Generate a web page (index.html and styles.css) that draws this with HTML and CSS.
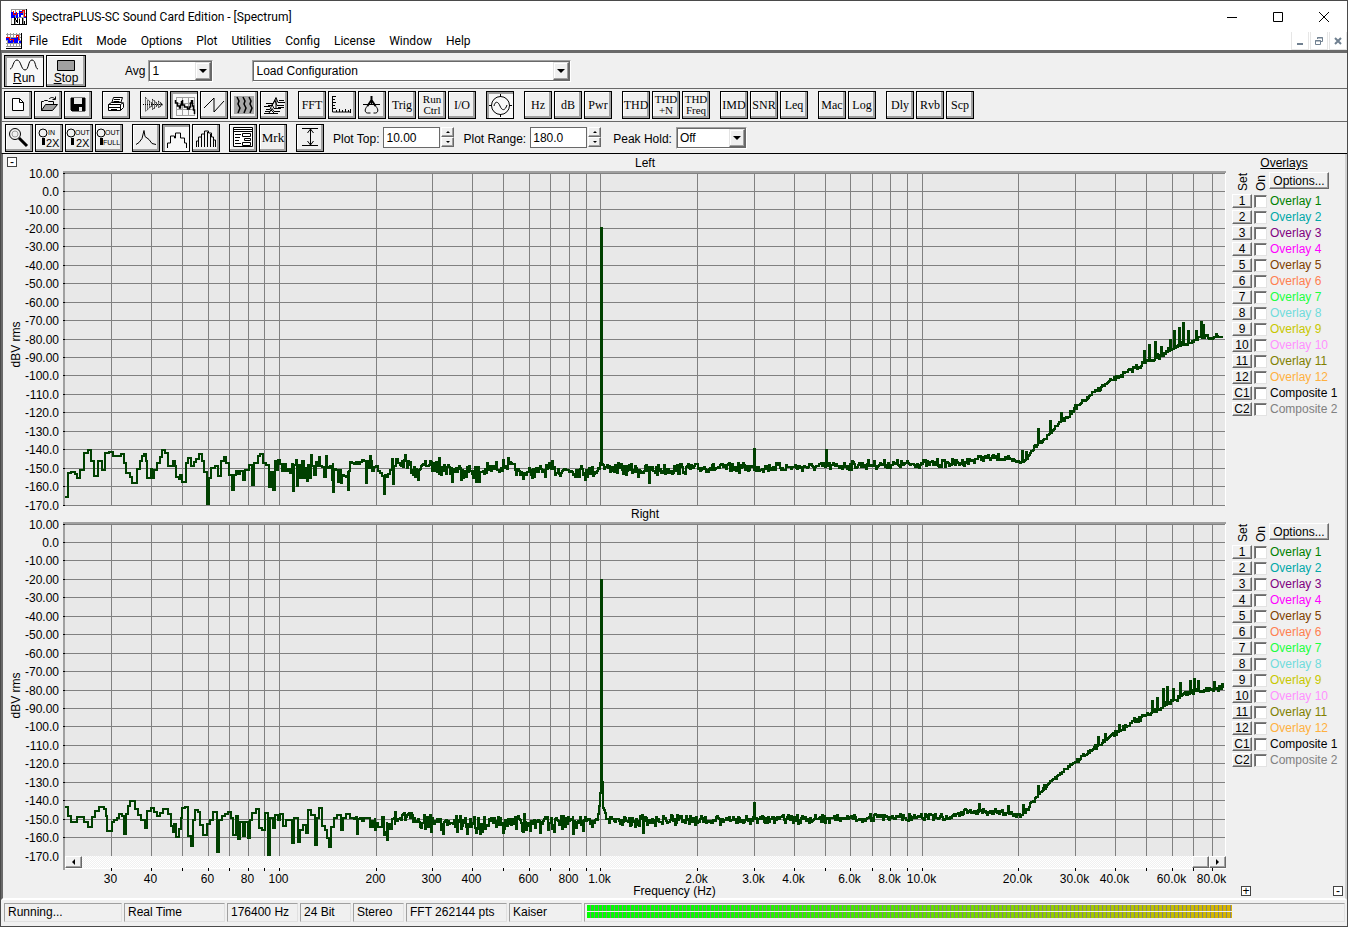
FILE: index.html
```
<!DOCTYPE html>
<html lang="en">
<head>
  <meta charset="UTF-8" />
  <meta name="viewport" content="width=device-width, initial-scale=1.0" />
  <title>SpectraPLUS-SC Sound Card Edition - [Spectrum]</title>
  <link rel="stylesheet" href="styles.css">
</head>
<body>
  <header class="titlebar">
    <svg class="app-icon" width="16" height="16" viewBox="0 0 16 16" shape-rendering="crispEdges">
      <path class="grid" d="M0.5 0v16M4.5 0v16M8.5 0v16M12.5 0v16M0 0.5h16M0 4.5h16M0 8.5h16"/>
      <path class="blue" d="M1 3v5h2v-3h3v4M9 8V3h2v3M13 8h2"/>
      <path class="red" d="M2 2v3h3v-2M9 3h2V1h2v6h2"/>
      <path class="ink" d="M15.5 0v16M0 15.5h16M3.5 15V9l3 4V9M8.5 15v-5M11.5 15V9M13.5 15v-3"/>
    </svg>
    <h1>SpectraPLUS-SC Sound Card Edition - [Spectrum]</h1>
    <div class="caption-buttons">
      <button aria-label="Minimize"><svg width="12" height="12" viewBox="0 0 12 12"><path d="M1 6.5h10"/></svg></button>
      <button aria-label="Maximize"><svg width="12" height="12" viewBox="0 0 12 12"><path d="M1.5 1.5h9v9h-9z"/></svg></button>
      <button aria-label="Close"><svg width="12" height="12" viewBox="0 0 12 12"><path d="M1 1l10 10M11 1L1 11"/></svg></button>
    </div>
  </header>

  <nav class="menubar">
    <svg class="app-icon" width="16" height="16" viewBox="0 0 16 16" shape-rendering="crispEdges">
      <path class="grid" d="M1.5 0v14M4.5 0v14M7.5 0v14M10.5 0v14M13.5 0v14M0 1.5h15M0 4.5h15M0 7.5h15M0 10.5h15M0 13.5h15"/>
      <path class="blue" d="M0 6h3v3h3V6h3v3h2V4M13 9h2"/>
      <path class="red" d="M0 4h3v2h4v3M10 5V2h2v4h2"/>
      <path class="ink" d="M15.5 0v16M0 15.5h16"/>
    </svg>
    <button>File</button>
    <button>Edit</button>
    <button>Mode</button>
    <button>Options</button>
    <button>Plot</button>
    <button>Utilities</button>
    <button>Config</button>
    <button>License</button>
    <button>Window</button>
    <button>Help</button>
    <div class="mdi-buttons">
      <button aria-label="Minimize window"><svg width="10" height="10" viewBox="0 0 10 10"><path d="M2 8h6"/></svg></button>
      <button aria-label="Restore window"><svg width="10" height="10" viewBox="0 0 10 10"><path class="thin" d="M3.5 3V1.5h5v4H7M1.5 4.5h5v4h-5zM1 5h6M3 2h6"/></svg></button>
      <button aria-label="Close window"><svg width="10" height="10" viewBox="0 0 10 10"><path d="M2 2l6 6M8 2l-6 6"/></svg></button>
    </div>
  </nav>

  <div class="toolbar run-bar">
    <button class="big pressed">
      <svg width="30" height="14" viewBox="0 0 30 14"><path d="M1 11C4 11 4 2 8 2s4 10 8 10 3-10 7-10 3 9 6 9"/></svg>
      <span><u>R</u>un</span>
    </button>
    <button class="big">
      <svg width="20" height="14" viewBox="0 0 20 14"><path class="gray" d="M1.5 2.5h17v10h-17z"/></svg>
      <span><u>S</u>top</span>
    </button>
    <label class="avg-label" for="avg">Avg</label>
    <div class="combo avg-combo">
      <select id="avg"><option>1</option><option>2</option><option>4</option></select>
      <i></i>
    </div>
    <div class="combo config-combo">
      <select aria-label="Configuration"><option>Load Configuration</option></select>
      <i></i>
    </div>
  </div>

  <div class="toolbar tool-bar">
    <div class="group">
      <button aria-label="New"><svg viewBox="0 0 26 26"><path class="paper" d="M7.500 6.500h7l4 4v8h-11z"/><path d="M14.500 6.500v4h4"/></svg></button>
      <button aria-label="Open"><svg viewBox="0 0 26 26"><path d="M6.500 18.500v-9h2l1-1h3l1 1h5v3M14 7c2-2 4-2 6 0M20.500 4.500v3h-3"/><path class="gray" d="M6.500 18.500l4-6h12l-5 6z"/></svg></button>
      <button aria-label="Save"><svg viewBox="0 0 26 26"><path class="black" d="M6 6h14v13H7l-1-1z"/><path class="light" d="M9 6h8v6H9zM14 15h3v4h-3z"/></svg></button>
    </div>
    <div class="group">
      <button aria-label="Print"><svg viewBox="0 0 26 26"><path class="paper" d="M8.500 11.500l2-6h9l-2 6z"/><path d="M11 7.500h6M10.500 9.500h6"/><path class="paper" d="M5.500 12.500l3-2h10l2 1v4l-3 3h-12z"/><path d="M5.500 12.500h12v6M17.500 12.500l3-2M5.500 15.500h12M8 17.500h6"/></svg></button>
    </div>
    <div class="group">
      <button aria-label="Time series"><svg viewBox="0 0 26 26"><path class="dots" d="M4.500 6v13M6.500 8v9M8.500 9v7M10.500 10v5M11.500 7v11M13.500 8v9M15.500 10v5M17.500 9v7M19.500 10v5"/><path d="M2 12.500h20M4 5l8 7.500-8 7.500M11 7l6 5.500-6 5.500M17 9l5 3.500-5 3.500" stroke-dasharray="1 1"/></svg></button>
      <button class="pressed" aria-label="Spectrum"><svg viewBox="0 0 26 26"><path class="faint" d="M5.500 5v18M11.500 5v18M17.500 5v18M23.500 5v18M5 5.500h19M5 11.500h19M5 17.500h19M5 23.500h19"/><path d="M4.500 8v3h2v3h2v2h1v-3h1v-4M11.500 8v5h2v2h3v2h2v-2h1v-4h1v-3M21.500 8v6h1v4h1v4" stroke-width="1.500"/></svg></button>
      <button aria-label="Phase"><svg viewBox="0 0 26 26"><path d="M3 16L13 6v14L23 9"/></svg></button>
      <button aria-label="Spectrogram"><svg viewBox="0 0 26 26"><path class="mid" d="M3 4h20v18H3z"/><path d="M6 5l2 4-1 3 2 4-2 5M12 5l2 4-1 3 2 4-2 5M18 5l2 4-1 3 2 4-2 5" stroke-width="1.500"/></svg></button>
      <button aria-label="3-D surface"><svg viewBox="0 0 26 26"><path d="M3 21.500h14M4 19.500h5l2-3 2 3h6M5 17.500h4l2-5 2 4h7M3 14.500h6M5 11.500h7l3-6 2 5h7M7 13.500h4l3-5 2 5h7M15 6v10M17 15.500h6M18 8.500h5M8 21l2-3 3 3"/></svg></button>
    </div>
    <div class="group">
      <button>FFT</button>
      <button aria-label="Scaling"><svg viewBox="0 0 26 26"><path d="M3.500 4v16h18M3 4.500h4M4 7.500h2M4 10.500h3M4 13.500h2M4 16.500h3M7.500 20v-2M10.500 20v-3M13.500 20v-2M16.500 20v-3M19.500 20v-2M21.500 21v-4"/></svg></button>
      <button aria-label="Calibration"><svg viewBox="0 0 26 26"><path class="bold" d="M12.500 4v4M12.500 8l-4 6M12.500 8l4 6"/><path d="M4 12.500h17M12.500 8v5M8.500 14c-4 4-2 7 0 7h3M16.500 14c4 4 2 7 0 7h-2"/></svg></button>
      <button>Trig</button>
      <button class="two">Run<br>Ctrl</button>
      <button>I/O</button>
    </div>
    <div class="group">
      <button class="pressed" aria-label="Signal generator"><svg viewBox="0 0 26 26"><circle cx="13.500" cy="13.500" r="9"/><path d="M13.500 2v3M13.500 22v3M2 13.500h3M22 13.500h3M7 14c1-5 4-5 6 0s5 5 7-1"/></svg></button>
    </div>
    <div class="group">
      <button>Hz</button>
      <button>dB</button>
      <button>Pwr</button>
    </div>
    <div class="group">
      <button>THD</button>
      <button class="two">THD<br>+N</button>
      <button class="two">THD<br>Freq</button>
    </div>
    <div class="group">
      <button>IMD</button>
      <button>SNR</button>
      <button>Leq</button>
    </div>
    <div class="group">
      <button>Mac</button>
      <button>Log</button>
    </div>
    <div class="group">
      <button>Dly</button>
      <button>Rvb</button>
      <button>Scp</button>
    </div>
  </div>

  <div class="toolbar plot-bar">
    <div class="group">
      <button aria-label="Zoom"><svg viewBox="0 0 26 26"><circle cx="9" cy="9" r="5.500"/><circle class="faint" cx="9" cy="9" r="3"/><path class="thick" d="M13 13l8 8"/></svg></button>
      <button aria-label="Zoom in 2X"><svg viewBox="0 0 26 26"><circle cx="7" cy="8" r="4"/><path class="thick" d="M7.500 13v7"/><text x="12" y="10">IN</text><text class="lg" x="10" y="22">2X</text></svg></button>
      <button aria-label="Zoom out 2X"><svg viewBox="0 0 26 26"><circle cx="5" cy="8" r="4"/><path class="thick" d="M6.500 13v7"/><text x="9" y="10">OUT</text><text class="lg" x="10" y="22">2X</text></svg></button>
      <button aria-label="Zoom out full"><svg viewBox="0 0 26 26"><circle cx="5" cy="8" r="4"/><path class="thick" d="M5.500 13v7"/><text x="9" y="10">OUT</text><text x="7" y="20">FULL</text></svg></button>
    </div>
    <div class="group">
      <button aria-label="Line plot"><svg viewBox="0 0 26 26"><path d="M3 19.500l3-2 3-4 2-8 1 6 4 3 3 4 4 1"/></svg></button>
      <button class="pressed" aria-label="Step plot"><svg viewBox="0 0 26 26"><path d="M4.500 23v-5h3v-7h4v2h1V8h5v5h4v5h2v5"/></svg></button>
      <button aria-label="Bar plot"><svg viewBox="0 0 26 26"><path d="M3.500 22v-6h2v-4h3v-3h3v-3h4v2h3v4h2v3h2v7M5.500 22v-9M8.500 22V10M11.500 22V7M14.500 22V7M17.500 22V9M20.500 22v-8"/></svg></button>
    </div>
    <div class="group">
      <button aria-label="Display options"><svg viewBox="0 0 26 26"><path class="paper" d="M3.500 2.500h19v19h-19z"/><path d="M3 4.500h20M3 6.500h20M5 9.500h6M5 12.500h5M5 15.500h4M5 18.500h6M12.500 8.500h8v3h-8zM14.500 13.500h6v2h-6zM12.500 17.500h8v3h-8z"/></svg></button>
      <button class="mrk">Mrk</button>
    </div>
    <div class="group">
      <button aria-label="Auto scale"><svg viewBox="0 0 26 26"><path d="M5 3.500h16M5 20.500h16M13.500 4v16M10.500 8l3-4 3 4M10.500 16l3 4 3-4"/></svg></button>
    </div>
    <label for="plotTop">Plot Top:</label>
    <div class="spin">
      <input type="text" id="plotTop" value="10.00">
      <div class="steps"><button aria-label="Plot top up"><b class="up"></b></button><button aria-label="Plot top down"><b class="down"></b></button></div>
    </div>
    <label for="plotRange">Plot Range:</label>
    <div class="spin">
      <input type="text" id="plotRange" value="180.0">
      <div class="steps"><button aria-label="Plot range up"><b class="up"></b></button><button aria-label="Plot range down"><b class="down"></b></button></div>
    </div>
    <label class="peak-label" for="peakHold">Peak Hold:</label>
    <div class="combo peak-combo">
      <select id="peakHold"><option>Off</option><option>On</option></select>
      <i></i>
    </div>
  </div>

  <main class="workspace">
    <button class="box-btn collapse" aria-label="Collapse">-</button>
    <section class="channel">
      <div class="chart">
        <h2>Left</h2>
        <svg id="left"></svg>
      </div>
      <aside class="overlays" data-channel="left">
        <h3>Overlays</h3>
      </aside>
    </section>
    <section class="channel">
      <div class="chart">
        <h2>Right</h2>
        <svg id="right"></svg>
      </div>
      <aside class="overlays" data-channel="right">
        <h3></h3>
      </aside>
    </section>
    <div class="axis-row">
      <div class="axis">
        <div class="scrollbar">
          <button aria-label="Scroll left"><b class="prev"></b></button>
          <span class="thumb"></span>
          <button aria-label="Scroll right"><b class="next"></b></button>
        </div>
        <svg id="xaxis"></svg>
      </div>
      <div class="axis-tools">
        <button class="box-btn" aria-label="Expand">+</button>
        <button class="box-btn" aria-label="Shrink">-</button>
      </div>
    </div>
  </main>

  <footer class="statusbar">
    <span class="w-state">Running...</span>
    <span class="w-mode">Real Time</span>
    <span class="w-rate">176400 Hz</span>
    <span class="w-bits">24 Bit</span>
    <span class="w-bits">Stereo</span>
    <span class="w-fft">FFT 262144 pts</span>
    <span class="w-window">Kaiser</span>
    <div class="levels">
      <div class="level"></div>
      <div class="level"></div>
    </div>
  </footer>
  <script src="script.js"></script>
</body>
</html>
```
FILE: styles.css
```
* {
  box-sizing: border-box;
  margin: 0;
  padding: 0;
}
body {
  display: flex;
  flex-direction: column;
  min-height: 100vh;
  border: 1px solid #4a4a4a;
  background: #f0f0f0;
  color: #000;
  font-family: "Liberation Sans", Arial, sans-serif;
  font-size: 12px;
  line-height: 14px;
}
button, input, select {
  font: inherit;
  color: inherit;
  border: none;
  border-radius: 0;
  background: none;
  outline: none;
}
h1, h2, h3 {
  font-size: 12px;
  font-weight: normal;
}
svg {
  display: block;
  fill: none;
  stroke: #000;
}

/* title and menu */
.titlebar, .menubar {
  display: flex;
  align-items: center;
  background: #fff;
  font-family: Roboto, "Open Sans", sans-serif;
}
.titlebar {
  height: 31px;
  padding-left: 10px;
}
.titlebar h1 {
  margin-left: 5px;
  font-size: 12px;
}
.app-icon .grid { stroke: #999; }
.app-icon .blue { stroke: #00f; stroke-width: 2; }
.app-icon .red { stroke: #e00; }
.caption-buttons {
  display: flex;
  margin-left: auto;
}
.caption-buttons button {
  display: flex;
  justify-content: center;
  width: 46px;
}
.menubar {
  height: 18px;
  padding-left: 5px;
}
.menubar > button {
  padding: 0 7px;
}
.mdi-buttons {
  display: flex;
  gap: 1px;
  margin-left: auto;
}
.mdi-buttons button {
  display: flex;
  align-items: center;
  justify-content: center;
  width: 18px;
  height: 18px;
  border: 1px solid #e6e6e6;
  border-top: none;
}
.mdi-buttons svg {
  stroke: #708090;
  stroke-width: 2;
}
.mdi-buttons .thin {
  stroke-width: 1;
}

/* toolbars */
.toolbar {
  display: flex;
  flex-wrap: wrap;
  border-left: 1px solid #696969;
  border-bottom: 1px solid #696969;
  padding: 2px 2px 1px;
}
.run-bar {
  min-height: 39px;
  border-top: 3px solid #696969;
  align-items: flex-start;
  gap: 2px;
}
.tool-bar {
  min-height: 33px;
  gap: 10px;
  align-items: flex-start;
}
.plot-bar {
  min-height: 32px;
  padding-left: 3px;
  column-gap: 9px;
  align-items: flex-start;
  border-bottom-color: #000;
}
.group {
  display: flex;
  gap: 2px;
}
.group > button, .big {
  width: 28px;
  height: 28px;
  border: 1px solid #000;
  background: #f0f0f0;
  box-shadow: inset -2px -2px #a0a0a0, inset 1px 1px #fff;
  font-family: "Liberation Serif", "Times New Roman", serif;
  font-size: 12px;
  white-space: nowrap;
  display: flex;
  align-items: center;
  justify-content: center;
}
.group > button.pressed, .big.pressed {
  background: #f8f8f8;
  box-shadow: inset 2px 2px #a0a0a0;
}
.group > button.two {
  font-size: 11px;
  line-height: 11px;
}
.group > button.mrk {
  font-size: 13px;
}
.group svg {
  width: 26px;
  height: 26px;
  flex: none;
}
.paper { fill: #fff; }
.gray { fill: #a0a0a0; }
.black { fill: #000; }
.light { fill: #e8e8e8; stroke: none; }
.mid { fill: #a8a8a8; stroke: none; }
.faint { stroke: #a0a0a0; }
.dots { stroke: #707070; }
.bold { stroke-width: 2; }
.thick { stroke-width: 3; }
.group text {
  fill: #000;
  stroke: none;
  font: 7px "Liberation Sans", sans-serif;
}
.group text.lg {
  font-size: 11px;
}
.big {
  width: 40px;
  height: 32px;
  flex-direction: column;
  font-family: "Liberation Sans", Arial, sans-serif;
  line-height: 13px;
}
.combo {
  position: relative;
  height: 22px;
  border: 1px solid #a0a0a0;
  border-right-color: #fff;
  border-bottom-color: #fff;
  background: #fff;
}
.combo select {
  appearance: none;
  width: 100%;
  height: 20px;
  padding-left: 2px;
  border: 1px solid #696969;
}
.combo i {
  position: absolute;
  top: 1px;
  right: 1px;
  width: 16px;
  height: 18px;
  background: #f0f0f0;
  border: 1px solid #e3e3e3;
  border-right-color: #696969;
  border-bottom-color: #696969;
  box-shadow: inset -1px -1px #a0a0a0, inset 1px 1px #fff;
  pointer-events: none;
}
.combo i::after {
  content: "";
  position: absolute;
  left: 3px;
  top: 6px;
  border: 4px solid transparent;
  border-top-color: #000;
  border-bottom: none;
}
.avg-label { margin: 9px 1px 0 37px; }
.avg-combo { width: 65px; margin-top: 5px; }
.config-combo { width: 319px; margin: 5px 0 0 37px; }
.plot-bar label { margin-top: 8px; }
.plot-bar .peak-label { margin-left: 3px; }
.peak-combo { width: 71px; margin: 3px 0 0 -5px; }
.spin {
  display: flex;
  gap: 1px;
  margin: 3px 0 0 -5px;
}
.spin input {
  width: 57px;
  height: 21px;
  padding-left: 2px;
  border: 1px solid #696969;
  background: #fff;
}
.steps button {
  display: flex;
  align-items: center;
  justify-content: center;
  width: 13px;
  height: 10px;
}
.steps button, .scrollbar button, .thumb, .set, .options {
  background: #f0f0f0;
  border: 1px solid #fff;
  border-right-color: #696969;
  border-bottom-color: #696969;
  box-shadow: inset -1px -1px #a0a0a0;
}
.up, .down {
  border: 2px solid transparent;
}
.up { border-top: none; border-bottom-color: #000; }
.down { border-bottom: none; border-top-color: #000; }

/* plots */
.workspace {
  position: relative;
  flex: 1;
  display: flex;
  flex-direction: column;
  padding-top: 1px;
  border: 2px solid #696969;
  border-top: none;
  border-right-color: #d0d0d0;
  border-bottom-color: #fff;
}
.box-btn {
  width: 10px;
  height: 10px;
  border: 1px solid #444;
  background: #fff;
  line-height: 8px;
  text-align: center;
}
.collapse {
  position: absolute;
  left: 4px;
  top: 3px;
}
.channel {
  flex: 1;
  display: flex;
  gap: 6px;
}
.chart {
  flex: 1;
  min-width: 0;
  display: flex;
  flex-direction: column;
}
.chart h2 {
  height: 16px;
  line-height: 16px;
  padding-left: 61px;
  text-align: center;
}
.chart svg {
  width: 100%;
  height: 0;
  min-height: 335px;
  flex: 1;
  overflow: visible;
}
svg text {
  fill: #000;
  stroke: none;
}
.plot-bg { fill: #e8e8e8; stroke: none; }
.gridline { stroke: #808080; }
.frame { stroke: #a0a0a0; stroke-width: 2; }
.edge { stroke: #fff; }
.trace { stroke: #004000; stroke-width: 2; }
.overlays {
  width: 113px;
}
.overlays h3 {
  height: 16px;
  line-height: 17px;
  text-align: center;
  padding-right: 9px;
  text-decoration: underline;
}
.overlay-head {
  display: flex;
  height: 22px;
  padding-left: 2px;
}
.vertical {
  writing-mode: vertical-rl;
  transform: rotate(180deg);
  width: 18px;
  height: 20px;
  line-height: 18px;
}
.options {
  width: 60px;
  height: 17px;
  margin: 1px 0 0 -1px;
  line-height: 14px;
}
.overlay-row {
  display: flex;
  align-items: center;
  height: 16px;
}
.set {
  width: 20px;
  height: 14px;
  line-height: 12px;
}
.overlay-row input {
  appearance: none;
  width: 13px;
  height: 13px;
  margin: 0 2px 0 2px;
  background: #fff;
  border: 1px solid #808080;
  border-right-color: #e3e3e3;
  border-bottom-color: #e3e3e3;
  box-shadow: inset 1px 1px #696969;
}
.overlay-row label {
  margin-left: 1px;
  white-space: nowrap;
}
.axis-row {
  display: flex;
  gap: 6px;
  margin-top: -1px;
}
.axis {
  flex: 1;
  min-width: 0;
}
.scrollbar {
  position: relative;
  display: flex;
  height: 12px;
  margin-left: 62px;
  background: repeating-conic-gradient(#fff 0 25%, #f0f0f0 0 50%) 0 0 / 2px 2px;
}
.scrollbar button, .thumb {
  width: 17px;
  height: 12px;
  display: flex;
  align-items: center;
  justify-content: center;
}
.thumb {
  margin-left: auto;
}
.prev, .next {
  border: 3px solid transparent;
}
.prev { border-left: none; border-right-color: #000; }
.next { border-right: none; border-left-color: #000; }
#xaxis {
  width: 100%;
  height: 30px;
  overflow: visible;
}
.axis-tools {
  width: 113px;
  display: flex;
  justify-content: space-between;
  align-items: flex-end;
  padding: 0 2px 2px 9px;
}

/* status */
.statusbar {
  display: flex;
  gap: 2px;
  height: 26px;
  padding: 3px 2px 4px 3px;
}
.statusbar span, .levels {
  border: 1px solid #a0a0a0;
  border-right-color: #e0e0e0;
  border-bottom-color: #e0e0e0;
  padding-left: 3px;
  line-height: 17px;
  white-space: nowrap;
}
.w-state { width: 118px; }
.w-mode { width: 101px; }
.w-rate { width: 71px; }
.w-bits { width: 51px; }
.w-fft { width: 101px; }
.w-window { width: 73px; }
.levels {
  flex: 1;
  padding: 1px 2px;
}
.level {
  width: 85.4%;
  height: 6px;
  margin-bottom: 1px;
  background:
    repeating-linear-gradient(90deg, transparent 0 3px, #808080 3px 4px),
    linear-gradient(90deg, #00ff00, #10f800 20%, #d8b400);
}
```
FILE: script.js
```
const SVG_NS = "http://www.w3.org/2000/svg";
const X0 = 62;
const LOG_MIN = 1.3332;
const LOG_MAX = 4.9424;
const FREQS = [30, 40, 50, 60, 70, 80, 90, 100, 200, 300, 400, 500, 600, 700, 800, 900,
  1000, 2000, 3000, 4000, 5000, 6000, 7000, 8000, 9000, 10000, 20000, 30000, 40000,
  50000, 60000, 70000, 80000];
const FREQ_LABELS = {
  30: "30", 40: "40", 60: "60", 80: "80", 100: "100", 200: "200", 300: "300", 400: "400",
  600: "600", 800: "800", 1000: "1.0k", 2000: "2.0k", 3000: "3.0k", 4000: "4.0k",
  6000: "6.0k", 8000: "8.0k", 10000: "10.0k", 20000: "20.0k", 30000: "30.0k",
  40000: "40.0k", 60000: "60.0k", 80000: "80.0k"
};

const OVERLAYS = [
  ["1", "Overlay 1", "#008000"], ["2", "Overlay 2", "#00a8a8"], ["3", "Overlay 3", "#800080"],
  ["4", "Overlay 4", "#ff00ff"], ["5", "Overlay 5", "#804000"], ["6", "Overlay 6", "#ff8050"],
  ["7", "Overlay 7", "#20ff40"], ["8", "Overlay 8", "#70dcdc"], ["9", "Overlay 9", "#c8c800"],
  ["10", "Overlay 10", "#ff90ff"], ["11", "Overlay 11", "#808000"], ["12", "Overlay 12", "#ffb040"],
  ["C1", "Composite 1", "#000000"], ["C2", "Composite 2", "#808080"]
];

// points: measured low bins [x, y]
// floor: [x, y, spread up, spread down], spikes: [x, y]
const TRACES = {
  left: {
    seed: 7, ox: 65, oy: 173,
    points: [[65,497],[68,473],[71,472],[75,474],[77,478],[80,470],[84,453],[88,450],[91,461],
      [94,476],[98,461],[102,470],[105,453],[109,452],[113,456],[118,456],[121,454],[124,463],
      [126,473],[130,477],[132,483],[137,469],[140,461],[142,456],[144,454],[146,461],[147,478],
      [151,469],[152,478],[154,470],[157,463],[160,457],[162,450],[165,453],[168,466],[171,466],
      [173,461],[175,466],[176,477],[179,479],[180,475],[182,482],[186,463],[188,458],[191,466],
      [194,462],[196,459],[199,454],[202,461],[204,472],[207,504],[209,478],[211,468],[215,466],
      [218,476],[221,461],[224,457],[226,463],[229,475],[232,490],[234,475],[236,471],[238,474],
      [240,471],[243,480],[245,470],[249,465],[252,485],[254,463],[258,456],[260,454],[263,463],
      [266,465],[269,487],[271,472],[273,490],[275,461],[277,470]],
    floor: [[278,466,6,14],[300,465,6,16],[330,467,8,16],[346,478,6,7],[350,463,3,4],[370,461,5,16],
      [380,476,5,5],[386,474,5,5],[388,466,7,11],[398,466,7,9],[405,461,5,6],[415,472,4,7],
      [425,464,3,5],[440,467,6,9],[480,472,8,8],[508,464,5,6],[520,474,5,5],[550,469,6,8],
      [597,471,5,7],[600,463,3,3],[604,467,4,6],[640,470,6,8],[700,468,5,5],[800,467,4,5],
      [870,465,5,4],[960,463,4,4],[980,458,3,3],[1005,458,4,3],[1010,461,3,3],[1024,462,2,2],
      [1035,445,2,3],[1045,438,1,3],[1060,422,1,2],[1075,409,3,4],[1090,395,2,3],[1110,381,2,2],
      [1133,369,3,3],[1150,360,3,4],[1170,350,3,4],[1190,342,3,2],[1205,337,2,2],[1225,337,4,2]],
    spikes: [[293,491],[297,486],[307,481],[311,455],[319,457],[326,456],[333,492],[341,483],
      [348,490],[366,483],[370,456],[384,494],[393,484],[405,455],[418,480],[439,458],[452,482],
      [461,480],[476,482],[479,482],[508,458],[552,461],[585,480],[601,228],[649,483],[754,449],
      [826,450],[1022,451],[1026,452],[1038,429],[1050,421],[1061,413],[1075,405],[1087,399],
      [1144,351],[1149,345],[1155,342],[1161,347],[1170,340],[1174,331],[1179,328],[1183,323],
      [1188,331],[1196,331],[1201,322],[1203,325]]
  },
  right: {
    seed: 21, ox: 65, oy: 524,
    points: [[65,807],[68,816],[71,822],[77,817],[84,822],[88,827],[92,817],[95,811],[99,807],
      [104,809],[106,816],[107,831],[112,822],[114,820],[117,818],[119,814],[122,816],[124,834],
      [126,814],[128,806],[130,801],[135,809],[138,815],[141,820],[145,828],[147,811],[151,808],
      [154,812],[157,816],[160,813],[163,809],[168,814],[171,826],[173,832],[174,824],[176,837],
      [179,829],[181,818],[182,808],[185,807],[188,836],[191,846],[193,820],[195,810],[198,812],
      [200,825],[203,835],[207,824],[210,820],[213,812],[217,852],[219,820],[222,816],[225,814],
      [228,812],[231,818],[233,835],[236,816],[238,839],[240,822],[243,836],[245,822],[248,838],
      [250,820],[252,813],[256,809],[259,828],[262,830],[265,813],[268,855],[270,818],[273,828],
      [275,815],[278,820],[280,814],[283,826],[286,820],[290,820],[292,843],[294,818],[298,842],
      [300,830],[303,825],[306,833],[308,810],[311,815],[315,845],[317,818],[319,808],[322,826],
      [325,830],[327,838],[329,847],[331,827],[334,818],[337,815],[341,830],[343,818],[346,814]],
    floor: [[349,815,4,6],[360,821,4,10],[388,824,7,12],[408,814,3,3],[424,824,11,9],[450,821,6,8],
      [470,824,7,12],[510,822,6,11],[560,821,6,12],[590,822,5,9],[597,819,3,4],[599,806,2,2],
      [601,782,1,1],[603,806,2,2],[607,820,3,3],[640,821,6,7],[700,820,5,5],[800,819,4,5],
      [900,817,4,4],[950,817,3,3],[965,811,3,3],[1000,812,3,3],[1020,816,2,2],[1028,809,3,3],
      [1038,794,2,2],[1045,788,1,2],[1050,782,1,2],[1075,762,2,2],[1105,740,3,3],[1125,727,2,3],
      [1145,716,3,2],[1160,708,3,3],[1180,696,2,3],[1195,691,3,2],[1210,690,2,2],[1225,688,4,2]],
    spikes: [[357,834],[375,830],[387,840],[395,812],[443,834],[457,832],[467,834],[480,834],
      [524,814],[573,834],[601,580],[643,833],[754,803],[979,804],[1008,806],[1023,805],[1038,786],
      [1044,785],[1098,737],[1105,734],[1119,725],[1134,718],[1152,701],[1157,698],[1163,689],
      [1167,687],[1173,689],[1180,683],[1190,681],[1194,679],[1198,681],[1214,682],[1222,684]]
  }
};

function random(seed) {
  return () => {
    seed = (seed * 16807) % 2147483647;
    return seed / 2147483647;
  };
}

function el(parent, name, attrs, text) {
  const node = document.createElementNS(SVG_NS, name);
  for (const key in attrs) node.setAttribute(key, attrs[key]);
  if (text !== undefined) node.textContent = text;
  parent.appendChild(node);
  return node;
}

function freqX(freq, width) {
  return X0 + (Math.log10(freq) - LOG_MIN) / (LOG_MAX - LOG_MIN) * (width - X0 - 1);
}

function buildTrace(trace) {
  const rand = random(trace.seed);
  const pts = trace.points.slice();
  const spikes = new Map(trace.spikes);
  let k = 0;
  for (let x = trace.floor[0][0]; x <= 1223; x++) {
    while (k < trace.floor.length - 2 && x >= trace.floor[k + 1][0]) k++;
    const a = trace.floor[k];
    const b = trace.floor[k + 1];
    const t = (x - a[0]) / (b[0] - a[0]);
    const [y, up, down] = [1, 2, 3].map(i => a[i] + (b[i] - a[i]) * t);
    const r = rand() * 2 - 1;
    const shaped = Math.sign(r) * Math.pow(Math.abs(r), 1.4);
    // wider bins at the low end hold their level for longer
    if (x > 400 || x % 2 === 0 || spikes.has(x)) {
      pts.push([x, y + (shaped < 0 ? shaped * up : shaped * down)]);
    }
    if (spikes.has(x)) {
      pts.push([x, spikes.get(x)]);
      pts.push([x + 1, y]);
      x++;
    }
  }
  return pts;
}

function drawChart(id) {
  const svg = document.getElementById(id);
  svg.replaceChildren();
  const w = svg.clientWidth;
  const h = svg.clientHeight;
  const plotH = h - 3;
  el(svg, "rect", { class: "plot-bg", x: X0, y: 2, width: w - X0 - 1, height: plotH + 1 });
  const grid = el(svg, "g", { "shape-rendering": "crispEdges" });
  FREQS.forEach(f => {
    const x = Math.floor(freqX(f, w)) + 0.5;
    el(grid, "path", { class: "gridline", d: `M${x} 2V${h}` });
  });
  for (let i = 0; i <= 18; i++) {
    const y = Math.floor(2 + plotH * i / 18) + 0.5;
    const level = 10 - i * 10;
    const label = level <= -100 ? level.toFixed(1) : level === 0 ? "0.0" : level.toFixed(2);
    el(grid, "path", { class: "gridline", d: `M${X0} ${y}H${w - 1}` });
    el(svg, "text", { x: 56, y: y + 4.5, "text-anchor": "end" }, label);
  }
  el(grid, "path", { class: "frame", d: `M60 1H${w}M61 0V${h}` });
  for (let i = 0; i <= 18; i++) {
    const y = Math.floor(2 + plotH * i / 18) + 0.5;
    el(grid, "path", { d: `M60 ${y}h2` });
  }
  el(grid, "path", { class: "edge", d: `M${w - 0.5} 2V${h}` });
  el(svg, "text", { transform: `translate(17 ${h / 2 + 6}) rotate(-90)`, "text-anchor": "middle" }, "dBV rms");

  const trace = TRACES[id];
  const sx = (w - X0 - 1) / 1160;
  const sy = plotH / 332;
  let d = "";
  buildTrace(trace).forEach(([x, y], i) => {
    const px = Math.round(X0 + (x - trace.ox) * sx);
    const py = Math.min(h - 1, Math.round(2 + (y - trace.oy) * sy));
    d += i ? `H${px}V${py}` : `M${px} ${py}`;
  });
  el(svg, "path", { class: "trace", "shape-rendering": "crispEdges", d });
}

function drawAxis() {
  const svg = document.getElementById("xaxis");
  svg.replaceChildren();
  const w = svg.clientWidth;
  el(svg, "path", { class: "edge", d: `M${X0} 0.5H${w}` });
  el(svg, "path", { class: "frame", d: "M61 -12V2" });
  FREQS.forEach(f => {
    const x = Math.floor(freqX(f, w)) + 0.5;
    el(svg, "path", { "shape-rendering": "crispEdges", d: `M${x} 0v3` });
    if (FREQ_LABELS[f]) el(svg, "text", { x: x - 1, y: 15, "text-anchor": "middle" }, FREQ_LABELS[f]);
  });
  el(svg, "text", { x: X0 + (w - X0) * 0.525, y: 27, "text-anchor": "middle" }, "Frequency (Hz)");
}

function buildOverlays() {
  document.querySelectorAll(".overlays").forEach(panel => {
    const channel = panel.dataset.channel;
    let html = `<div class="overlay-head"><span class="vertical">Set</span>
      <span class="vertical">On</span><button class="options">Options...</button></div>`;
    OVERLAYS.forEach(([key, name, color]) => {
      const id = `${channel}-${key}`;
      html += `<div class="overlay-row"><button class="set">${key}</button>
        <input type="checkbox" id="${id}"><label for="${id}" style="color:${color}">${name}</label></div>`;
    });
    panel.insertAdjacentHTML("beforeend", html);
  });
}

function draw() {
  drawChart("left");
  drawChart("right");
  drawAxis();
}

buildOverlays();
draw();
window.addEventListener("resize", draw);
```
